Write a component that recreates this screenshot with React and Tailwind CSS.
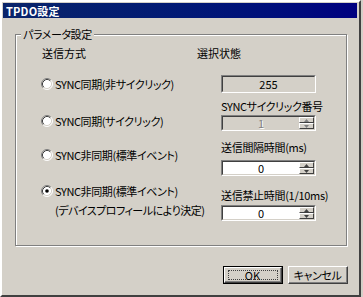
import React from 'react'

const font = "[font-family:'Noto_Sans_CJK_JP','Liberation_Sans',sans-serif] [font-feature-settings:'palt']"

function Radio({ checked, label, sub }) {
  return (
    <div className="flex flex-col whitespace-nowrap">
      <div className="flex items-center h-[14px] pl-[25px]">
        <svg width="12" height="12" viewBox="0 0 12 12" className="shrink-0">
          <circle cx="6" cy="6" r="5" fill="#fff" />
          <path d="M2.11 9.89 A5.5 5.5 0 0 1 9.89 2.11" stroke="#808080" fill="none" />
          <path d="M9.89 2.11 A5.5 5.5 0 0 1 2.11 9.89" stroke="#fff" fill="none" />
          <path d="M2.82 9.18 A4.5 4.5 0 0 1 9.18 2.82" stroke="#404040" fill="none" />
          <path d="M9.18 2.82 A4.5 4.5 0 0 1 2.82 9.18" stroke="#d4d0c8" fill="none" />
          {checked && <circle cx="6" cy="6" r="1.8" fill="#000" />}
        </svg>
        <span className="ml-[2px] tracking-[-0.4px]">{label}</span>
      </div>
      {sub && <div className="pl-[39px] mt-[5px] h-[14px] tracking-[-0.5px]">{sub}</div>}
    </div>
  )
}

function SpinBtn({ up, disabled }) {
  return (
    <div className="flex-1 flex items-center justify-center bg-[#d4d0c8] border-t border-l border-t-white border-l-white border-b border-r border-b-[#404040] border-r-[#404040]">
      <svg width="5" height="3" viewBox="0 0 5 3">
        <path d={up ? 'M0 3 L5 3 L2.5 0 Z' : 'M0 0 L5 0 L2.5 3 Z'} fill={disabled ? '#808080' : '#404040'} />
      </svg>
    </div>
  )
}

function Sunken({ children, className }) {
  return (
    <div className={'border border-t-[#808080] border-l-[#808080] border-b-white border-r-white ' + className}>
      <div className="h-full border border-t-[#404040] border-l-[#404040] border-b-[#d4d0c8] border-r-[#d4d0c8]">
        {children}
      </div>
    </div>
  )
}

function Spinner({ value, disabled }) {
  return (
    <Sunken className="h-[16px] w-[95px]">
      <div className={'flex h-full ' + (disabled ? 'bg-[#d4d0c8]' : 'bg-white')}>
        <div
          className={
            'flex-1 flex items-center justify-center leading-[12px] ' +
            (disabled ? 'text-[#808080] [text-shadow:1px_1px_0_#fff]' : 'text-black')
          }
        >
          {value}
        </div>
        <div className="w-[15px] flex flex-col">
          <SpinBtn up disabled={disabled} />
          <SpinBtn disabled={disabled} />
        </div>
      </div>
    </Sunken>
  )
}

function Button({ children, isDefault }) {
  return (
    <div className={'w-[60px] h-[18px] bg-[#d4d0c8] ' + (isDefault ? 'border border-black' : '')}>
      <div className="h-full border border-t-white border-l-white border-b-[#404040] border-r-[#404040]">
        <div className="h-full flex items-center justify-center border-b border-r border-b-[#808080] border-r-[#808080]">
          {isDefault ? (
            <div className="w-[50px] h-[10px] flex items-center justify-center border border-dotted border-[#404040] leading-[10px]">
              {children}
            </div>
          ) : (
            <span className="leading-[12px] tracking-[-0.4px]">{children}</span>
          )}
        </div>
      </div>
    </div>
  )
}

export default function App() {
  return (
    <div className={'w-[363px] h-[297px] bg-[#d4d0c8] text-[11px] leading-[14px] text-black ' + font}>
      <div className="w-[361px] h-[297px] flex flex-col border-t-2 border-l-2 border-t-white border-l-white border-b-2 border-r-2 border-b-[#404040] border-r-[#404040] pt-[1px] pl-[1px] pr-[2px]">
        {/* title bar */}
        <div className="h-[15px] bg-gradient-to-r from-[#0a246a] to-[#000080] flex items-center pl-[3px]">
          <span className="text-white font-bold text-[11px] leading-[12px] tracking-[0.2px]">TPDO設定</span>
        </div>

        {/* group box */}
        <div className="relative mt-[16px] ml-[12px] w-[332px] h-[212px] border border-[#808080] shadow-[inset_1px_1px_0_#fff,1px_1px_0_#fff]">
          <div className="absolute left-[5px] top-[-8px] px-[2px] bg-[#d4d0c8] leading-[14px] tracking-[-0.4px]">
            パラメータ設定
          </div>

          <div className="flex pt-[11px]">
            {/* left column */}
            <div className="w-[181px] flex flex-col">
              <div className="pl-[26px] h-[14px]">送信方式</div>
              <div className="mt-[17px]">
                <Radio label="SYNC同期(非サイクリック)" />
              </div>
              <div className="mt-[23px]">
                <Radio label="SYNC同期(サイクリック)" />
              </div>
              <div className="mt-[20px]">
                <Radio label="SYNC非同期(標準イベント)" />
              </div>
              <div className="mt-[22px]">
                <Radio checked label="SYNC非同期(標準イベント)" sub="(デバイスプロフィールにより決定)" />
              </div>
            </div>

            {/* right column */}
            <div className="flex flex-col">
              <div className="h-[14px]">選択状態</div>
              <div className="ml-[24px] flex flex-col whitespace-nowrap">
                <Sunken className="mt-[15px] h-[18px] w-[95px]">
                  <div className="h-full flex items-center justify-center bg-[#d4d0c8] leading-[12px]">255</div>
                </Sunken>
                <div className="mt-[6px] h-[14px] tracking-[-0.4px]">SYNCサイクリック番号</div>
                <div className="mt-[2px]">
                  <Spinner value="1" disabled />
                </div>
                <div className="mt-[9px] h-[14px] tracking-[-0.3px]">送信間隔時間(ms)</div>
                <div className="mt-[6px]">
                  <Spinner value="0" />
                </div>
                <div className="mt-[12px] h-[14px] tracking-[-0.3px]">送信禁止時間(1/10ms)</div>
                <div className="mt-[3px]">
                  <Spinner value="0" />
                </div>
              </div>
            </div>
          </div>
        </div>

        {/* buttons */}
        <div className="mt-[20px] flex justify-end gap-[5px] pr-[9px]">
          <Button isDefault>OK</Button>
          <Button>キャンセル</Button>
        </div>
      </div>
    </div>
  )
}
